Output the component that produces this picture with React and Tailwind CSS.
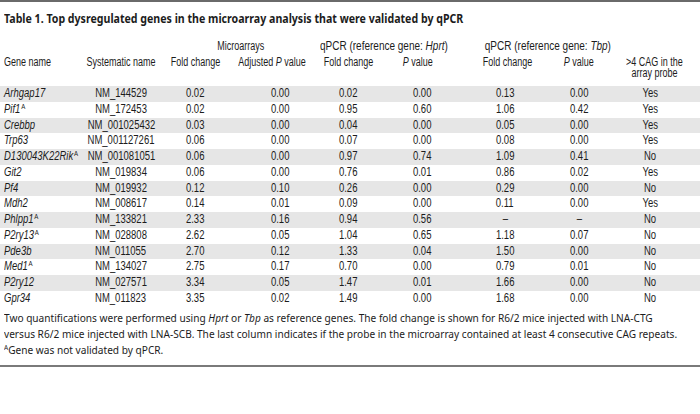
import React from "react";

// table body: [gene, superscript?, systematic, fc1, adjP, fc2, p2, fc3, p3, cag]
const ROWS = [
  ["Arhgap17", false, "NM_144529", "0.02", "0.00", "0.02", "0.00", "0.13", "0.00", "Yes"],
  ["Pif1", true, "NM_172453", "0.02", "0.00", "0.95", "0.60", "1.06", "0.42", "Yes"],
  ["Crebbp", false, "NM_001025432", "0.03", "0.00", "0.04", "0.00", "0.05", "0.00", "Yes"],
  ["Trp63", false, "NM_001127261", "0.06", "0.00", "0.07", "0.00", "0.08", "0.00", "Yes"],
  ["D130043K22Rik", true, "NM_001081051", "0.06", "0.00", "0.97", "0.74", "1.09", "0.41", "No"],
  ["Git2", false, "NM_019834", "0.06", "0.00", "0.76", "0.01", "0.86", "0.02", "Yes"],
  ["Pf4", false, "NM_019932", "0.12", "0.10", "0.26", "0.00", "0.29", "0.00", "No"],
  ["Mdh2", false, "NM_008617", "0.14", "0.01", "0.09", "0.00", "0.11", "0.00", "Yes"],
  ["Phlpp1", true, "NM_133821", "2.33", "0.16", "0.94", "0.56", "–", "–", "No"],
  ["P2ry13", true, "NM_028808", "2.62", "0.05", "1.04", "0.65", "1.18", "0.07", "No"],
  ["Pde3b", false, "NM_011055", "2.70", "0.12", "1.33", "0.04", "1.50", "0.00", "No"],
  ["Med1", true, "NM_134027", "2.75", "0.17", "0.70", "0.00", "0.79", "0.01", "No"],
  ["P2ry12", false, "NM_027571", "3.34", "0.05", "1.47", "0.01", "1.66", "0.00", "No"],
  ["Gpr34", false, "NM_011823", "3.35", "0.02", "1.49", "0.00", "1.68", "0.00", "No"],
];

const COLS = "grid grid-cols-[82px_78px_70px_92px_52px_96px_70px_78px_66px]";

// no condensed face installed: squeeze the glyphs instead
const SQUEEZE = {
  head: "scale-x-[0.72]",
  group: "scale-x-[0.8]",
  body: "scale-x-[0.76]",
};

function N({ children, left = false, kind = "body" }) {
  return (
    <span
      className={`inline-block whitespace-nowrap ${SQUEEZE[kind]} ${left ? "origin-left" : "origin-center"}`}
    >
      {children}
    </span>
  );
}

// centered cell (flex so overflow spreads both sides)
function Cell({ children, className = "" }) {
  return <div className={`flex justify-center ${className}`}>{children}</div>;
}

function Sup() {
  return <sup className="text-[8px] not-italic ml-[1px]">A</sup>;
}

export default function App() {
  return (
    <div className="w-[700px] h-[414px] bg-white text-[#1c1c1c] overflow-hidden">
      <div className="border-t-2 border-[#6a6a6a]" />

      {/* Title */}
      <div className="pl-[4px] pt-[8px] text-[13px] leading-[16px] font-bold font-['Noto_Sans',sans-serif]">
        <span className="inline-block whitespace-nowrap origin-left scale-x-[0.816]">
          Table 1. Top dysregulated genes in the microarray analysis that were validated by qPCR
        </span>
      </div>

      <div className="font-['Liberation_Sans',Arial,sans-serif] text-[12.5px]">
        {/* group headers */}
        <div className={`${COLS} mt-[12px] leading-[16px]`}>
          <div className="col-span-2" />
          <Cell className="col-span-2">
            <N kind="head">Microarrays</N>
          </Cell>
          <div className="col-span-2 -ml-[2px]">
            <N left kind="group">
              qPCR (reference gene: <i>Hprt</i>)
            </N>
          </div>
          <Cell className="col-span-2 pl-[8px]">
            <N kind="group">
              qPCR (reference gene: <i>Tbp</i>)
            </N>
          </Cell>
        </div>

        {/* column headers */}
        <div className={`${COLS} mt-[3px] leading-[11px] items-start`}>
          <div className="pl-[4px]">
            <N left kind="head">
              Gene name
            </N>
          </div>
          <Cell>
            <N kind="head">Systematic name</N>
          </Cell>
          <Cell>
            <N kind="head">Fold change</N>
          </Cell>
          <Cell className="pr-[8px]">
            <N kind="head">
              Adjusted <i>P</i> value
            </N>
          </Cell>
          <Cell>
            <N kind="head">Fold change</N>
          </Cell>
          <Cell className="pr-[8px]">
            <N kind="head">
              <i>P</i> value
            </N>
          </Cell>
          <Cell className="pl-[4px]">
            <N kind="head">Fold change</N>
          </Cell>
          <Cell>
            <N kind="head">
              <i>P</i> value
            </N>
          </Cell>
          <Cell className="pl-[6px]">
            <N kind="head">
              <span className="block text-center">&gt;4 CAG in the</span>
              <span className="block text-center">array probe</span>
            </N>
          </Cell>
        </div>

        {/* body */}
        <div className="mt-[7px]">
          {ROWS.map((r, i) => (
            <div
              key={r[0]}
              className={`${COLS} h-[15.75px] leading-[15.75px] ${i % 2 === 0 ? "bg-[#e6e6e6]" : "bg-white"}`}
            >
              <div className="pl-[4px] italic">
                <N left>
                  {r[0]}
                  {r[1] ? <Sup /> : null}
                </N>
              </div>
              {r.slice(2, 9).map((v, j) => (
                <Cell key={j} className={j === 2 ? "pl-[8px]" : ""}>
                  <N>{v}</N>
                </Cell>
              ))}
              <Cell className="pr-[2px]">
                <N>{r[9]}</N>
              </Cell>
            </div>
          ))}
        </div>
      </div>

      {/* footnote */}
      <div className="pl-[4px] pt-[3px] text-[11px] leading-[16px] font-['Noto_Sans',sans-serif]">
        <div>
          <span className="inline-block whitespace-nowrap origin-left scale-x-[0.92]">
            Two quantifications were performed using <i>Hprt</i> or <i>Tbp</i> as reference genes. The fold change is
            shown for R6/2 mice injected with LNA-CTG
          </span>
        </div>
        <div>
          <span className="inline-block whitespace-nowrap origin-left scale-x-[0.92]">
            versus R6/2 mice injected with LNA-SCB. The last column indicates if the probe in the microarray contained
            at least 4 consecutive CAG repeats.
          </span>
        </div>
        <div>
          <span className="inline-block whitespace-nowrap origin-left scale-x-[0.92]">
            <sup className="text-[7px]">A</sup>Gene was not validated by qPCR.
          </span>
        </div>
      </div>

      <div className="mt-[7px] border-t-2 border-[#7a7a7a]" />
    </div>
  );
}
